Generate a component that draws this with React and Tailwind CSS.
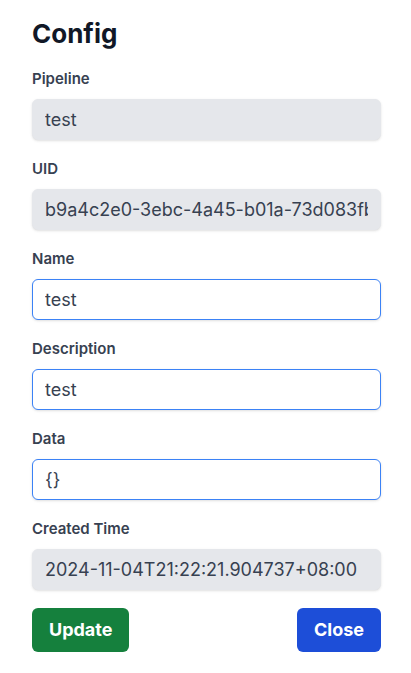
import { useState } from "react";

const fieldCls =
  "block w-full rounded-md px-3 py-[6px] text-lg leading-[27px] text-[#374151] shadow-sm outline-none";

function Field({ label, value, onChange, readOnly }) {
  return (
    <div className="mb-[19px]">
      <label className="mb-2.5 block text-[15px] font-semibold leading-5 text-[#374151]">
        {label}
      </label>
      {readOnly ? (
        <input
          type="text"
          value={value}
          readOnly
          className={`${fieldCls} border border-[#e5e7eb] bg-[#e5e7eb]`}
        />
      ) : (
        <input
          type="text"
          value={value}
          onChange={(e) => onChange(e.target.value)}
          className={`${fieldCls} border border-[#3b82f6] bg-white`}
        />
      )}
    </div>
  );
}

export default function App() {
  const [name, setName] = useState("test");
  const [description, setDescription] = useState("test");
  const [data, setData] = useState("{}");

  return (
    <main
      className="min-h-screen bg-white pl-8 pr-[30px] pt-[18px] text-[#374151]"
      style={{ fontFamily: "Inter, 'Noto Sans', sans-serif" }}
    >
      <h1 className="mb-[19px] text-[26px] font-bold leading-8 text-[#111827]">Config</h1>

      <Field label="Pipeline" value="test" readOnly />
      <Field label="UID" value="b9a4c2e0-3ebc-4a45-b01a-73d083fbd0f1" readOnly />
      <Field label="Name" value={name} onChange={setName} />
      <Field label="Description" value={description} onChange={setDescription} />
      <Field label="Data" value={data} onChange={setData} />
      <Field label="Created Time" value="2024-11-04T21:22:21.904737+08:00" readOnly />

      {/* Actions */}
      <div className="-mt-px flex items-center justify-between">
        <button
          type="button"
          className="rounded-md bg-[#15803d] px-[17px] py-2 text-lg font-bold leading-7 text-white"
        >
          Update
        </button>
        <button
          type="button"
          className="rounded-md bg-[#1d4ed8] px-[17px] py-2 text-lg font-bold leading-7 text-white"
        >
          Close
        </button>
      </div>
    </main>
  );
}
